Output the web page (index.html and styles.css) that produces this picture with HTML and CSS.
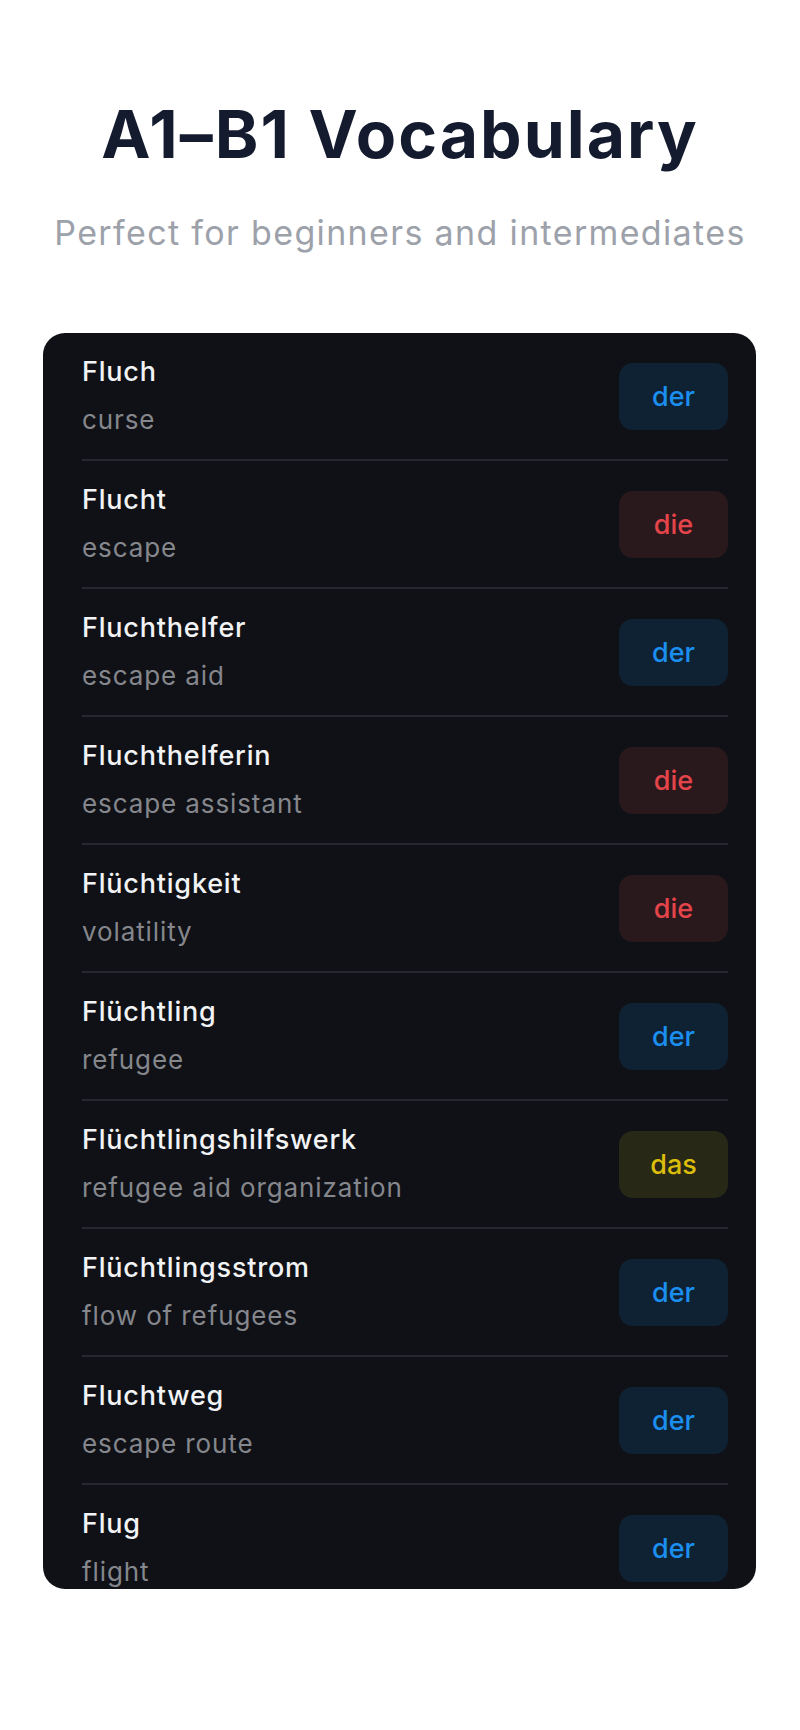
FILE: index.html
```html
<!DOCTYPE html>
<html lang="de">
<head>
    <meta charset="UTF-8">
    <meta name="viewport" content="width=device-width, initial-scale=1.0">
    <title>A1–B1 Vocabulary</title>
    <link rel="stylesheet" href="styles.css">
</head>
<body>
    <div class="header">
        <h1>A1–B1 Vocabulary</h1>
        <p class="subtitle">Perfect for beginners and intermediates</p>
    </div>

    <div class="card">
        <div class="row">
            <div class="words"><div class="word">Fluch</div><div class="meaning">curse</div></div>
            <span class="tag der">der</span>
        </div>
        <div class="row">
            <div class="words"><div class="word">Flucht</div><div class="meaning">escape</div></div>
            <span class="tag die">die</span>
        </div>
        <div class="row">
            <div class="words"><div class="word">Fluchthelfer</div><div class="meaning">escape aid</div></div>
            <span class="tag der">der</span>
        </div>
        <div class="row">
            <div class="words"><div class="word">Fluchthelferin</div><div class="meaning">escape assistant</div></div>
            <span class="tag die">die</span>
        </div>
        <div class="row">
            <div class="words"><div class="word">Flüchtigkeit</div><div class="meaning">volatility</div></div>
            <span class="tag die">die</span>
        </div>
        <div class="row">
            <div class="words"><div class="word">Flüchtling</div><div class="meaning">refugee</div></div>
            <span class="tag der">der</span>
        </div>
        <div class="row">
            <div class="words"><div class="word">Flüchtlingshilfswerk</div><div class="meaning">refugee aid organization</div></div>
            <span class="tag das">das</span>
        </div>
        <div class="row">
            <div class="words"><div class="word">Flüchtlingsstrom</div><div class="meaning">flow of refugees</div></div>
            <span class="tag der">der</span>
        </div>
        <div class="row">
            <div class="words"><div class="word">Fluchtweg</div><div class="meaning">escape route</div></div>
            <span class="tag der">der</span>
        </div>
        <div class="row">
            <div class="words"><div class="word">Flug</div><div class="meaning">flight</div></div>
            <span class="tag der">der</span>
        </div>
    </div>
</body>
</html>
```

FILE: styles.css
```css
body {
    margin: 0;
    background-color: #ffffff;
    font-family: Inter, "Liberation Sans", sans-serif;
}
.header {
    text-align: center;
    padding-top: 94px;
}
h1 {
    margin: 0;
    font-size: 66px;
    line-height: 80px;
    font-weight: 700;
    color: #141b2e;
    letter-spacing: 2px;
}
.subtitle {
    margin: 38px 0 0;
    font-size: 34px;
    line-height: 42px;
    font-weight: 400;
    color: #9ca1aa;
    letter-spacing: 1.35px;
}
.card {
    margin: 79px 44px 0 43px;
    height: 1256px;
    overflow: hidden;
    background-color: #0f1117;
    border-radius: 22px;
    padding: 0 28px 0 39px;
}
.row {
    display: flex;
    align-items: center;
    justify-content: space-between;
    height: 126px;
    border-bottom: 2px solid #25282e;
}
.words {
    display: flex;
    flex-direction: column;
}
.word {
    font-size: 27px;
    line-height: 34px;
    font-weight: 500;
    color: #f2f3f5;
    letter-spacing: 0.8px;
}
.meaning {
    margin-top: 14px;
    font-size: 26px;
    line-height: 34px;
    color: #85878c;
    letter-spacing: 0.9px;
}
.tag {
    width: 109px;
    height: 67px;
    border-radius: 14px;
    display: flex;
    align-items: center;
    justify-content: center;
    font-size: 27px;
    font-weight: 500;
}
.der {
    background-color: #0f2233;
    color: #1b8ff0;
}
.die {
    background-color: #2a191c;
    color: #e5444a;
}
.das {
    background-color: #282817;
    color: #dcbd0a;
}
```
